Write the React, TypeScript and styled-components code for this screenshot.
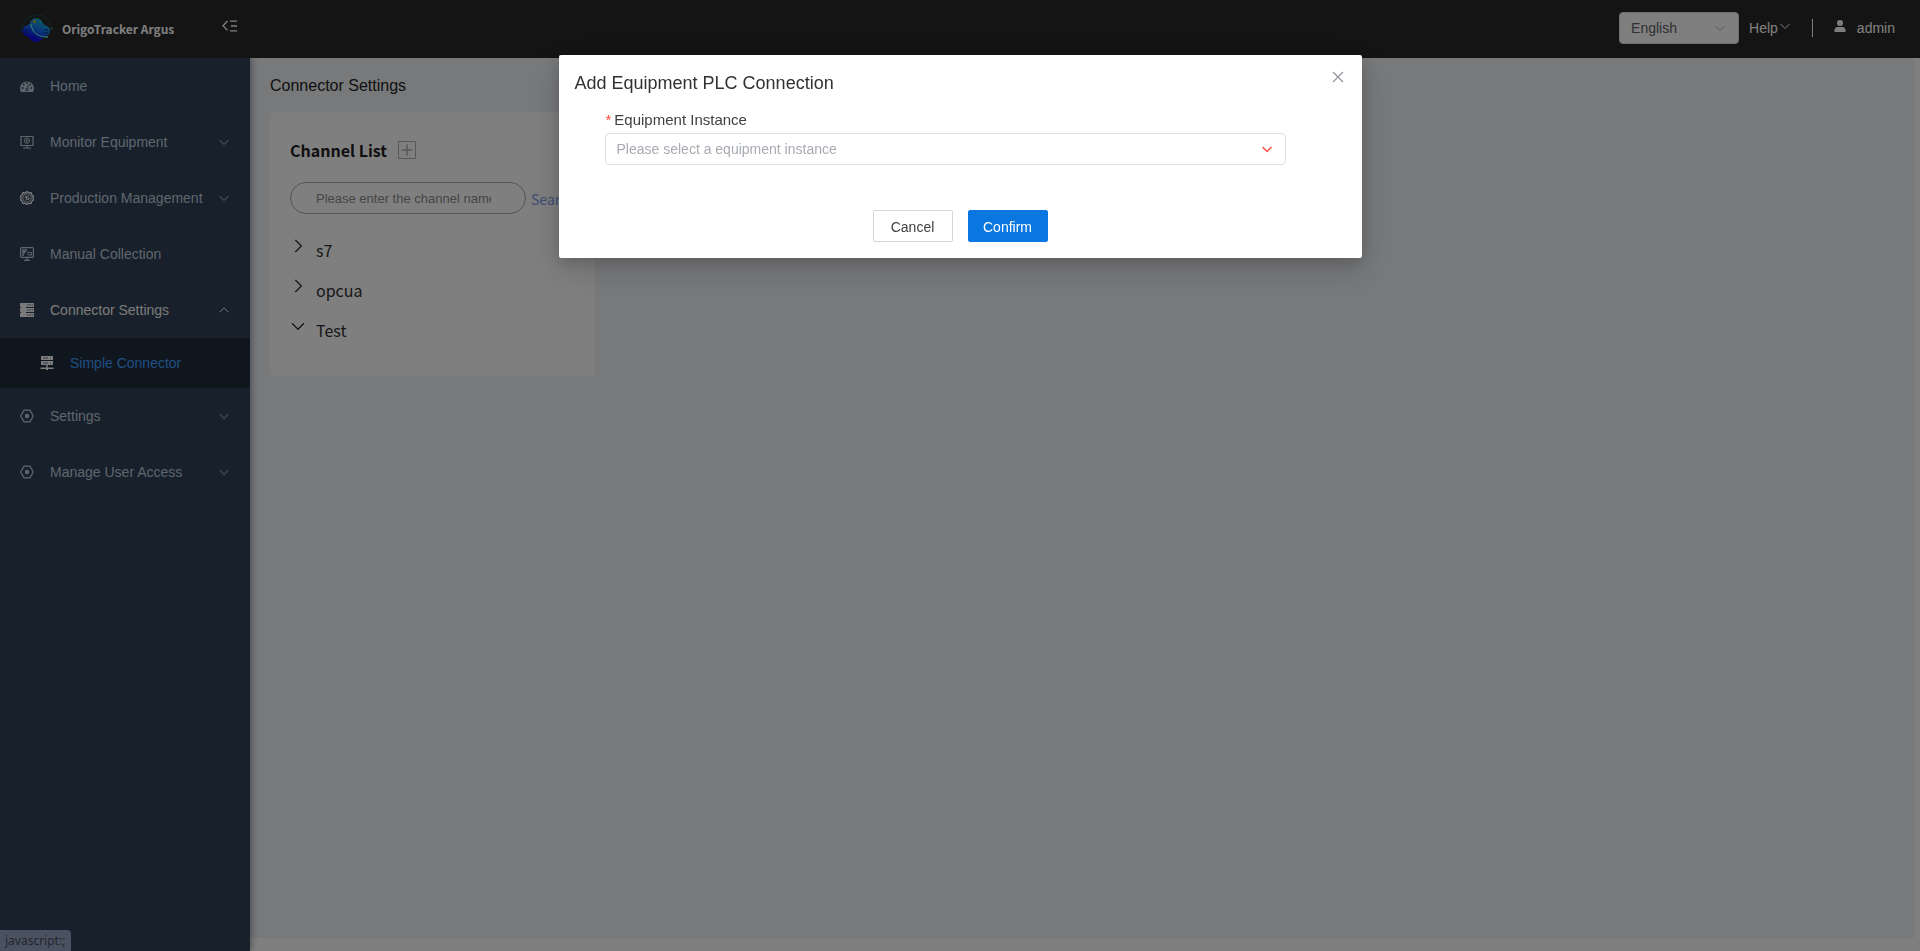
import React from 'react';
import styled, { createGlobalStyle } from 'styled-components';

const sans = '"Liberation Sans", Arial, sans-serif';
const han = '"Noto Sans CJK SC", "Noto Sans", sans-serif';

const GlobalStyle = createGlobalStyle`
  *, *::before, *::after { box-sizing: border-box; }
  body { margin: 0; background: #fff; font-family: ${sans}; font-size: 14px; color: #303133; }
  button, input, select { font: inherit; color: inherit; margin: 0; }
  h1, h2, ul { margin: 0; padding: 0; font-weight: 400; }
  ul { list-style: none; }
  a { text-decoration: none; color: inherit; }
`;

const Page = styled.div`
  display: flex;
  flex-direction: column;
  min-height: 100vh;
`;

const Header = styled.header`
  position: relative;
  z-index: 2;
  display: flex;
  align-items: center;
  justify-content: space-between;
  height: 58px;
  padding: 0 25px 0 20px;
  background: #282828;
  color: #fff;
`;

const Brand = styled.div`
  display: flex;
  align-items: center;
`;

const BrandName = styled.span`
  width: 160px;
  margin-left: 9px;
  font-family: ${han};
  font-size: 12px;
  font-weight: 700;
  line-height: 20px;
  white-space: nowrap;
`;

const IconButton = styled.button`
  display: flex;
  padding: 0;
  border: 0;
  background: none;
  cursor: pointer;
`;

const FoldButton = styled(IconButton)`
  align-self: flex-start;
  margin-top: 6px;
`;

const HeaderTools = styled.div`
  display: flex;
  align-items: center;
  padding-bottom: 2px;
`;

const SelectBox = styled.div<{ $width?: string; $arrow: string }>`
  display: grid;
  align-items: center;
  width: ${(p) => p.$width ?? '100%'};
  > * { grid-area: 1 / 1; }
  > svg {
    justify-self: end;
    margin-right: 13px;
    color: ${(p) => p.$arrow};
    pointer-events: none;
  }
`;

const Select = styled.select<{ $tone: string }>`
  appearance: none;
  width: 100%;
  height: 32px;
  padding: 0 32px 0 11px;
  border: 1px solid #dcdfe6;
  border-radius: 4px;
  background: #fff;
  color: ${(p) => p.$tone};
`;

const HelpButton = styled(IconButton)`
  align-items: center;
  gap: 1px;
  margin-left: 10px;
  svg { margin-bottom: 4px; }
`;

const Divider = styled.span`
  width: 1px;
  height: 18px;
  margin: 0 21px;
  background: #fff;
`;

const User = styled.a`
  display: flex;
  align-items: center;
  gap: 11px;
  svg { margin-bottom: 4px; }
`;

const Body = styled.div`
  display: flex;
  flex: 1;
`;

const Sidebar = styled.nav`
  position: relative;
  z-index: 1;
  flex: 0 0 250px;
  background: #304156;
  box-shadow: 2px 0 6px rgba(0, 21, 41, 0.35);
`;

const MenuLink = styled.a<{ $active?: boolean }>`
  display: flex;
  align-items: center;
  height: 56px;
  padding: 0 20px;
  color: ${(p) => (p.$active ? '#f4f4f5' : '#bfcbd9')};
  > span { flex: 1; margin-left: 16px; white-space: nowrap; }
`;

const SubLink = styled(MenuLink)`
  height: 50px;
  padding-left: 40px;
  background: #1f2d3d;
  color: #409eff;
  > svg { color: #fff; }
`;

const Main = styled.main`
  flex: 1;
  min-width: 0;
  margin: 0 6px 13px 0;
  padding: 16px 20px;
  background: #f0f2f5;
`;

const PageTitle = styled.h1`
  margin-bottom: 14px;
  font-size: 16px;
  line-height: 24px;
  color: #222;
`;

const Card = styled.section`
  width: 325px;
  padding: 24px 20px;
  border-radius: 4px;
  background: #fff;
  overflow: hidden;
  font-family: ${han};
`;

const CardHead = styled.div`
  display: flex;
  align-items: center;
  gap: 11px;
  height: 28px;
`;

const CardTitle = styled.h2`
  font-size: 16px;
  font-weight: 700;
  line-height: 28px;
  color: #1f2023;
`;

const SearchRow = styled.form`
  display: flex;
  align-items: center;
  gap: 5px;
  margin-top: 18px;
`;

const SearchInput = styled.input`
  width: 236px;
  height: 32px;
  padding: 0 34px 0 25px;
  border: 1px solid #a8a8a8;
  border-radius: 16px;
  background: #fff;
  font-family: ${sans};
  font-size: 13px;
  &::placeholder { color: #8c8c8c; }
`;

const SearchButton = styled(IconButton)`
  padding-top: 2px;
  color: #7a9ee8;
  font-size: 14px;
  line-height: 20px;
`;

const Tree = styled.ul`
  padding: 16px 0 2px;
`;

const TreeItem = styled.li`
  display: flex;
  align-items: center;
  height: 40px;
`;

const TreeButton = styled(IconButton)`
  align-items: center;
  gap: 10px;
  font-size: 16px;
  line-height: 24px;
  svg { margin-bottom: 9px; }
`;

const LinkStatus = styled.div`
  position: fixed;
  left: 0;
  bottom: 0;
  z-index: 3;
  height: 21px;
  padding: 0 6px 0 5px;
  border-radius: 0 4px 0 0;
  background: #94a5c4;
  color: #474c58;
  font-family: "Noto Sans", sans-serif;
  font-size: 12px;
  line-height: 21px;
`;

const Overlay = styled.div`
  position: fixed;
  inset: 0;
  z-index: 4;
  display: flex;
  align-items: flex-start;
  justify-content: center;
  padding-top: 55px;
  background: rgba(0, 0, 0, 0.5);
`;

const Dialog = styled.div`
  width: 803px;
  max-width: 100%;
  padding: 16px;
  border-radius: 2px;
  background: #fff;
  box-shadow: 0 12px 32px 4px rgba(0, 0, 0, 0.12), 0 4px 16px rgba(0, 0, 0, 0.16);
`;

const DialogHead = styled.div`
  display: flex;
  align-items: flex-start;
  justify-content: space-between;
  height: 37px;
  padding-right: 2px;
`;

const DialogTitle = styled.h2`
  font-size: 18px;
  line-height: 24px;
`;

const Field = styled.div`
  margin: 0 60px 0 30px;
  padding-bottom: 45px;
`;

const Label = styled.label`
  display: block;
  padding: 0 0 1px 1px;
  font-size: 15px;
  line-height: 24px;
  color: #404145;
  &::before { content: '*'; margin-right: 3px; color: #ff4d40; }
`;

const Actions = styled.div`
  display: flex;
  justify-content: center;
  gap: 15px;
`;

const Button = styled.button<{ $primary?: boolean }>`
  width: 80px;
  height: 32px;
  padding: 2px 0 0;
  border: 1px solid ${(p) => (p.$primary ? '#0a76e0' : '#d5d5d5')};
  border-radius: 2px;
  background: ${(p) => (p.$primary ? '#0a76e0' : '#fff')};
  color: ${(p) => (p.$primary ? '#fff' : '#404145')};
  cursor: pointer;
`;

type Dir = 'down' | 'up' | 'right';
const chevrons: Record<Dir, string> = {
  down: 'M1.5 4l4.500 4.500 4.500-4.500',
  up: 'M1.5 8.300l4.500-4.500 4.500 4.500',
  right: 'M4 1.500l4.500 4.500-4.500 4.500',
};

const Chevron = ({ dir = 'down', size = 12, weight = 1 }: { dir?: Dir; size?: number; weight?: number }) => (
  <svg width={size} height={size} viewBox="0 0 12 12" fill="none" stroke="currentColor" strokeWidth={weight}>
    <path d={chevrons[dir]} />
  </svg>
);

const Logo = () => (
  <svg width="33" height="30" viewBox="0 0 33 30">
    <defs>
      <linearGradient id="lobe" x1="0.8" y1="0" x2="0.3" y2="1">
        <stop offset="0" stopColor="#12c4c4" />
        <stop offset="0.45" stopColor="#1878f0" />
        <stop offset="0.8" stopColor="#1010e8" />
      </linearGradient>
    </defs>
    <path d="M1 18C2 8 8 2 17 1c8 0 13 5 14 12" fill="none" stroke="#147c90" strokeOpacity=".7" strokeDasharray="2 1" />
    <path d="M10 9.500C10 3 21 2 23 9c1 2 2 2 4 3 4 2 4 9-1 10-3 0-3 1-4 3-3 4-10 4-12 0-1-2-2-3-4-3-4-1-4-8-1-10 2-1 4-1 5-2.500z" fill="url(#lobe)" />
    <path d="M11 10c1 8 7 13 17 13" fill="none" stroke="#5cf0e0" strokeWidth="1.3" />
    <circle cx="14.500" cy="7.500" r="1.500" fill="#c8b820" />
    <path d="M24 16h4M24 19h4M6 16h3M5 19h4" stroke="#0a3c90" strokeWidth="1.500" strokeDasharray="1.500 1" />
    <circle cx="31.500" cy="14.500" r="1" fill="#20b890" />
    <circle cx="1.500" cy="17" r="1" fill="#1838a0" />
  </svg>
);

const FoldIcon = () => (
  <svg width="15" height="12" viewBox="0 0 15 12" fill="none" stroke="currentColor" strokeWidth="1.3">
    <path d="M5.500 1L1 5.700l4.500 4.700M8 1.200h7M9 6h6M8 10.800h7" />
  </svg>
);

const UserIcon = () => (
  <svg width="12" height="12" viewBox="0 0 12 12" fill="currentColor">
    <circle cx="6" cy="3" r="3" />
    <path d="M.5 12v-2c0-2 1.500-3 3-3h5c1.500 0 3 1 3 3v2z" />
  </svg>
);

const CloseIcon = () => (
  <svg width="12" height="12" viewBox="0 0 12 12" stroke="#909399" strokeWidth="1.200">
    <path d="M1 1l10 10M11 1L1 11" />
  </svg>
);

const PlusIcon = () => (
  <svg width="18" height="18" viewBox="0 0 18 18" fill="none" stroke="#b0b0b0">
    <path d="M.5.5h17v17H.5z" />
    <path d="M9 3.500v11M3.500 9h11" strokeWidth="1.500" />
  </svg>
);

const GaugeIcon = () => (
  <svg width="14" height="14" viewBox="0 0 14 14">
    <path d="M1 13a7 7 0 1 1 12 0z" fill="currentColor" />
    <g fill="#304156">
      <circle cx="2.700" cy="9" r=".9" /><circle cx="3.800" cy="5.500" r=".9" /><circle cx="7" cy="4" r=".9" />
      <circle cx="11.300" cy="9" r=".9" /><circle cx="10.200" cy="5.500" r=".9" /><circle cx="7" cy="10.500" r="1.500" />
    </g>
    <path d="M7 10.500L8.500 6" stroke="#304156" />
    <circle cx="7" cy="10.500" r=".8" fill="currentColor" />
  </svg>
);

const MonitorIcon = () => (
  <svg width="14" height="14" viewBox="0 0 14 14" fill="none" stroke="currentColor">
    <path d="M1 1.500h12v9H1zM7 10.500v2M3 13h8" strokeWidth="1.200" />
    <circle cx="7" cy="5.700" r="2.600" /><circle cx="7" cy="5.700" r=".8" />
  </svg>
);

const GearIcon = () => (
  <svg width="14" height="14" viewBox="0 0 14 14" fill="none" stroke="#fff">
    <path d="M7 .6l1.900 1.200 2.200-.1.700 2.100L13.500 5.300 12.800 7l.7 1.900-1.700 1.400-.7 2.100-2.200-.1L7 13.400l-1.900-1.100-2.200.1-.7-2.100L.5 8.900 1.200 7 .5 5.300l1.700-1.500.7-2.100 2.200.1z" strokeWidth="1.200" />
    <circle cx="7" cy="7" r="4.200" strokeOpacity=".8" />
    <path d="M6.300 9.500V5L4.600 6.600M8 4.500V9l1.600-1.600" />
  </svg>
);

const CollectIcon = () => (
  <svg width="14" height="14" viewBox="0 0 14 14" fill="none" stroke="currentColor">
    <rect x=".6" y=".6" width="12.800" height="9.800" rx="1" strokeWidth="1.200" />
    <path d="M2 2.800h5M2 4.500h4M2 6.200h3M2 8h2M7 11v2M4 13.400h6" strokeWidth="1.300" />
    <path d="M7 4.500l1.500 1h3v2.500H9L7 6.500" />
  </svg>
);

const RackIcon = () => (
  <svg width="14" height="14" viewBox="0 0 14 14">
    <path d="M0 0h14v4H0zM0 5h14v4H0zM0 10h14v4H0zM1 3h5v8H1z" fill="currentColor" />
    <path d="M7 2h6M7 7h6M7 12h6" stroke="#304156" strokeOpacity=".8" strokeDasharray="1.500 .8" />
  </svg>
);

const ServerIcon = () => (
  <svg width="14" height="14" viewBox="0 0 14 14">
    <path d="M2 0h10a1 1 0 0 1 1 1v3H1V1a1 1 0 0 1 1-1zM1 5h12v3a1 1 0 0 1-1 1H2a1 1 0 0 1-1-1zM6.300 9h1.400v2.500H13.500V13H8v1H6v-1H.5v-1.500h5.800z" fill="currentColor" />
    <path d="M3 2h5M10 2h1M3 7h5M10 7h1" stroke="#1f2d3d" strokeOpacity=".7" />
  </svg>
);

const HexIcon = () => (
  <svg width="14" height="14" viewBox="0 0 14 14" fill="none" stroke="currentColor" strokeWidth="1.300">
    <path d="M4 1.200h6L13.300 7 10 12.800H4L.7 7z" strokeLinejoin="round" />
    <circle cx="7" cy="7" r="2.200" fill="currentColor" stroke="none" />
  </svg>
);

type Item = { label: string; Icon: React.FC; arrow?: Dir; active?: boolean; child?: string };

const menu: Item[] = [
  { label: 'Home', Icon: GaugeIcon },
  { label: 'Monitor Equipment', Icon: MonitorIcon, arrow: 'down' },
  { label: 'Production Management', Icon: GearIcon, arrow: 'down' },
  { label: 'Manual Collection', Icon: CollectIcon },
  { label: 'Connector Settings', Icon: RackIcon, arrow: 'up', active: true, child: 'Simple Connector' },
  { label: 'Settings', Icon: HexIcon, arrow: 'down' },
  { label: 'Manage User Access', Icon: HexIcon, arrow: 'down' },
];

const channels: { name: string; dir: Dir }[] = [
  { name: 's7', dir: 'right' },
  { name: 'opcua', dir: 'right' },
  { name: 'Test', dir: 'down' },
];

export default function App() {
  return (
    <>
      <GlobalStyle />
      <Page>
        <Header>
          <Brand>
            <Logo />
            <BrandName>OrigoTracker Argus</BrandName>
            <FoldButton aria-label="Collapse menu"><FoldIcon /></FoldButton>
          </Brand>
          <HeaderTools>
            <SelectBox $width="120px" $arrow="#a8abb2">
              <Select $tone="#606266" aria-label="Language" defaultValue="en">
                <option value="en">English</option>
              </Select>
              <Chevron />
            </SelectBox>
            <HelpButton>Help<Chevron /></HelpButton>
            <Divider />
            <User href="#user"><UserIcon />admin</User>
          </HeaderTools>
        </Header>
        <Body>
          <Sidebar>
            <ul>
              {menu.map(({ label, Icon, arrow, active, child }) => (
                <li key={label}>
                  <MenuLink href="#menu" $active={active}>
                    <Icon />
                    <span>{label}</span>
                    {arrow && <Chevron dir={arrow} />}
                  </MenuLink>
                  {child && (
                    <SubLink href="#simple">
                      <ServerIcon />
                      <span>{child}</span>
                    </SubLink>
                  )}
                </li>
              ))}
            </ul>
          </Sidebar>
          <Main>
            <PageTitle>Connector Settings</PageTitle>
            <Card>
              <CardHead>
                <CardTitle>Channel List</CardTitle>
                <IconButton aria-label="Add channel"><PlusIcon /></IconButton>
              </CardHead>
              <SearchRow>
                <SearchInput aria-label="Channel name" placeholder="Please enter the channel name" />
                <SearchButton type="button">Search</SearchButton>
              </SearchRow>
              <Tree>
                {channels.map((c) => (
                  <TreeItem key={c.name}>
                    <TreeButton><Chevron dir={c.dir} size={16} />{c.name}</TreeButton>
                  </TreeItem>
                ))}
              </Tree>
            </Card>
          </Main>
        </Body>
      </Page>
      <LinkStatus>javascript:;</LinkStatus>
      <Overlay>
        <Dialog role="dialog" aria-labelledby="dialog-title">
          <DialogHead>
            <DialogTitle id="dialog-title">Add Equipment PLC Connection</DialogTitle>
            <IconButton aria-label="Close"><CloseIcon /></IconButton>
          </DialogHead>
          <Field>
            <Label htmlFor="instance">Equipment Instance</Label>
            <SelectBox $arrow="#ff4d40">
              <Select id="instance" $tone="#a8abb2" defaultValue="">
                <option value="">Please select a equipment instance</option>
              </Select>
              <Chevron weight={1.4} />
            </SelectBox>
          </Field>
          <Actions>
            <Button>Cancel</Button>
            <Button $primary>Confirm</Button>
          </Actions>
        </Dialog>
      </Overlay>
    </>
  );
}
